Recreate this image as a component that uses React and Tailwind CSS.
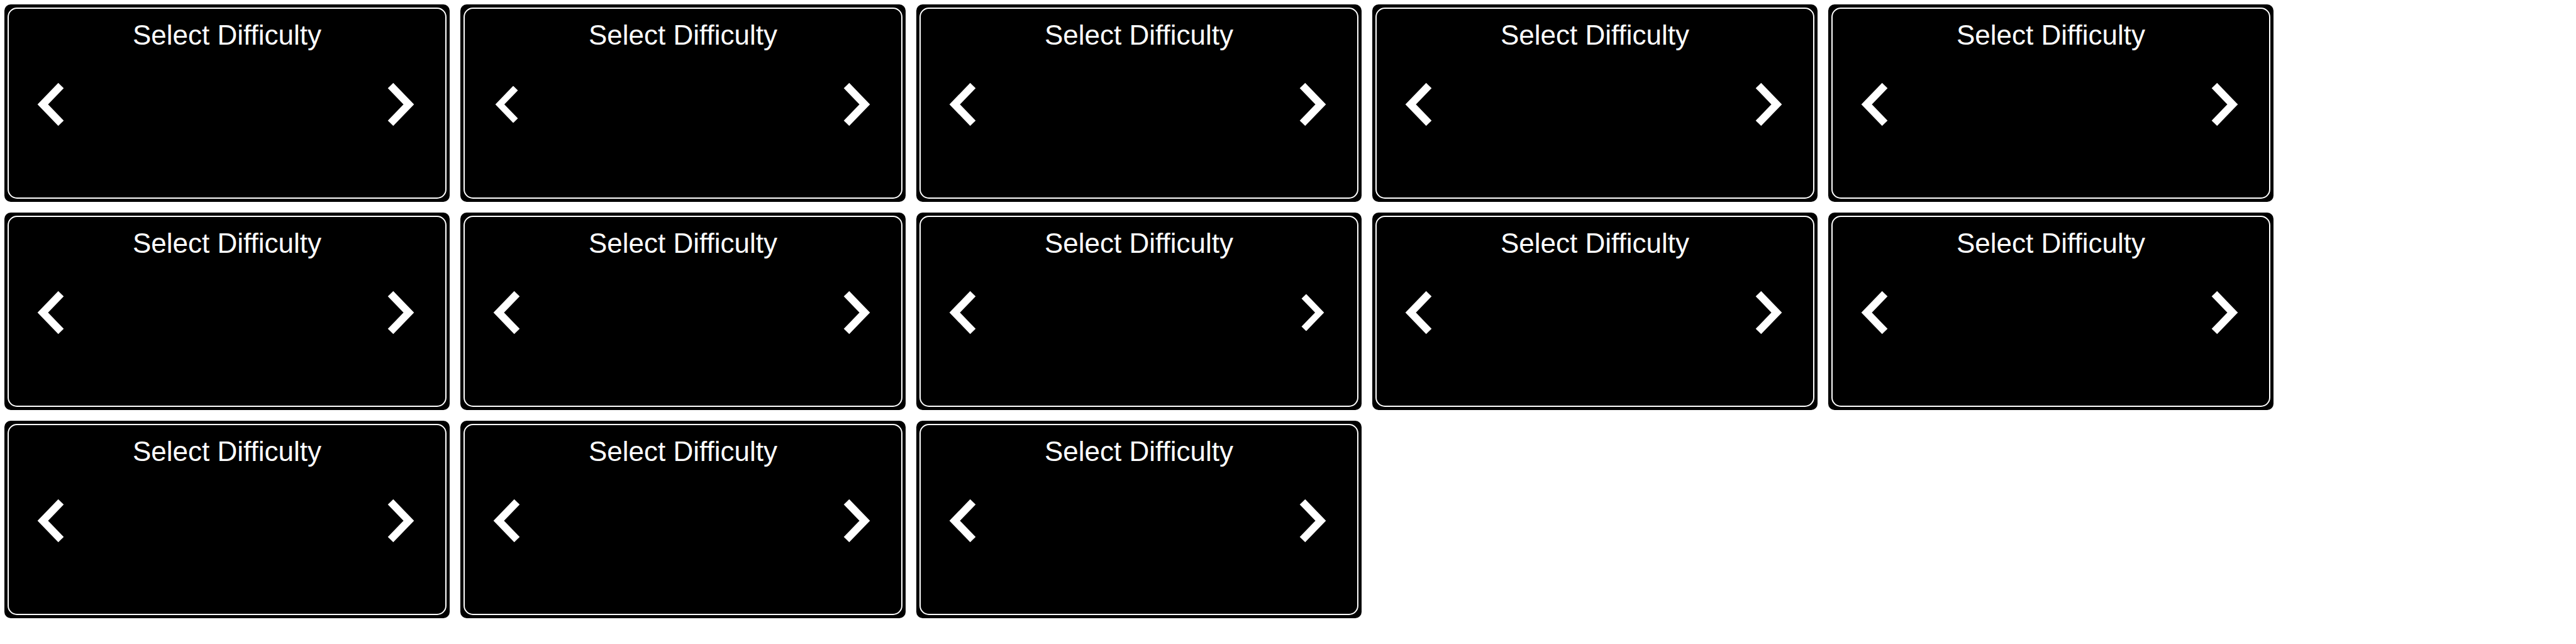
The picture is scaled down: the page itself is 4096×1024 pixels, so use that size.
import React from 'react';

// arrow drawn as a stroked polyline, butt caps, sharp join
const Chevron = ({ dir = 'left', small = false }) => (
    <svg
        viewBox="0 0 44 68"
        className={small ? 'w-[44px] h-[68px] scale-[0.86]' : 'w-[44px] h-[68px]'}
        fill="none"
        stroke="white"
        strokeWidth={12}
        strokeLinecap="butt"
        strokeLinejoin="miter"
    >
        {dir === 'left' ? (
            <polyline points="38,4 9,34 38,64" />
        ) : (
            <polyline points="6,4 35,34 6,64" />
        )}
    </svg>
);

const DifficultyCard = ({ smallLeft, smallRight }) => (
    <div className="w-[708px] h-[314px] bg-black rounded-[10px] p-[5px]">
        <div className="h-full border-2 border-white rounded-[15px] pt-[17px]">
            <h2 className="text-center text-white text-[44px] leading-[50px] font-['Liberation_Sans',Arial,sans-serif]">
                Select Difficulty
            </h2>
            <div className="mt-[51px] pl-[45px] pr-[49px] flex items-center justify-between">
                <button className="flex">
                    <Chevron dir="left" small={smallLeft} />
                </button>
                <button className="flex">
                    <Chevron dir="right" small={smallRight} />
                </button>
            </div>
        </div>
    </div>
);

const cards = [
    {}, { smallLeft: true }, {}, {}, {},
    {}, {}, { smallRight: true }, {}, {},
    {}, {}, {},
];

const App = () => {
    return (
        <div className="min-h-screen bg-white p-[7px]">
            <div className="flex flex-wrap gap-[17px]">
                {cards.map((c, i) => (
                    <DifficultyCard key={i} {...c} />
                ))}
            </div>
        </div>
    );
};

export default App;
